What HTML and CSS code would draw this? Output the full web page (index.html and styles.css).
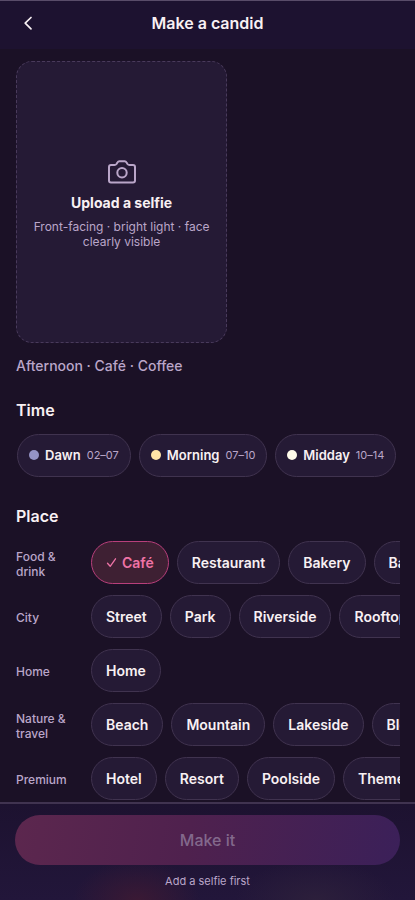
FILE: index.html
```html
<!DOCTYPE html>
<html lang="en">
<head>
<meta charset="utf-8">
<meta name="viewport" content="width=device-width, initial-scale=1">
<title>Make a candid</title>
<link rel="stylesheet" href="styles.css">
</head>
<body>
<header class="topbar">
  <button class="back" type="button" aria-label="Back">
    <svg width="20" height="20" viewBox="0 0 20 20" fill="none" stroke="currentColor" stroke-width="1.7" stroke-linecap="round" stroke-linejoin="round"><path d="M13 4.500 7.200 10.200l5.800 5.700"/></svg>
  </button>
  <h1 class="title">Make a candid</h1>
</header>
<main class="content">
  <button class="upload" type="button">
    <svg class="camera" width="28" height="28" viewBox="0 0 28 28" fill="none" stroke="currentColor" stroke-width="2" stroke-linejoin="round" stroke-linecap="round"><path d="M3 7h3.500a2.500 2.500 0 0 0 2-1l1.100-1.800a2 2 0 0 1 1.700-1h5.400a2 2 0 0 1 1.700 1L19.500 6a2.500 2.500 0 0 0 2 1H25a2 2 0 0 1 2 2v13.500a2 2 0 0 1-2 2H3a2 2 0 0 1-2-2V9a2 2 0 0 1 2-2Z"/><circle cx="14" cy="14.800" r="4.700"/></svg>
    <span class="upload-title">Upload a selfie</span>
    <span class="upload-hint">Front-facing · bright light · face clearly visible</span>
  </button>
  <p class="summary">Afternoon · Café · Coffee</p>

  <section class="time">
    <h2 class="heading">Time</h2>
    <div class="times">
      <button class="chip chip-time" type="button"><span class="dot dawn"></span>Dawn <span class="hours">02–07</span></button>
      <button class="chip chip-time" type="button"><span class="dot morning"></span>Morning <span class="hours">07–10</span></button>
      <button class="chip chip-time" type="button"><span class="dot midday"></span>Midday <span class="hours">10–14</span></button>
    </div>
  </section>

  <section class="place">
    <h2 class="heading">Place</h2>
    <div class="groups">
      <div class="group">
        <h3 class="label">Food &amp; drink</h3>
        <div class="chips">
          <button class="chip selected" type="button" aria-pressed="true"><svg width="11" height="11" viewBox="0 0 11 11" fill="none" stroke="currentColor" stroke-width="1.300" stroke-linecap="round" stroke-linejoin="round"><path d="m1.500 6.300 2.700 3L9.500 1.800"/></svg>Café</button>
          <button class="chip" type="button">Restaurant</button>
          <button class="chip" type="button">Bakery</button>
          <button class="chip" type="button">Bar</button>
        </div>
      </div>
      <div class="group">
        <h3 class="label">City</h3>
        <div class="chips">
          <button class="chip" type="button">Street</button>
          <button class="chip" type="button">Park</button>
          <button class="chip" type="button">Riverside</button>
          <button class="chip" type="button">Rooftop</button>
        </div>
      </div>
      <div class="group">
        <h3 class="label">Home</h3>
        <div class="chips">
          <button class="chip" type="button">Home</button>
        </div>
      </div>
      <div class="group">
        <h3 class="label">Nature &amp; travel</h3>
        <div class="chips">
          <button class="chip" type="button">Beach</button>
          <button class="chip" type="button">Mountain</button>
          <button class="chip" type="button">Lakeside</button>
          <button class="chip" type="button">Blossom</button>
        </div>
      </div>
      <div class="group">
        <h3 class="label">Premium</h3>
        <div class="chips">
          <button class="chip" type="button">Hotel</button>
          <button class="chip" type="button">Resort</button>
          <button class="chip" type="button">Poolside</button>
          <button class="chip" type="button">Theme park</button>
        </div>
      </div>
    </div>
  </section>
</main>
<footer class="actions">
  <button class="submit" type="button" disabled>Make it</button>
  <p class="note">Add a selfie first</p>
</footer>
</body>
</html>
```
FILE: styles.css
```css
:root {
  --bg: #1b1126;
  --surface: #251a35;
  --line: #40334f;
  --text: #f8f0f3;
  --muted: #baa6c9;
}

* { box-sizing: border-box; }

body {
  margin: 0;
  height: 100vh;
  display: flex;
  flex-direction: column;
  overflow: hidden;
  background: var(--bg);
  color: var(--text);
  font-family: Inter, "Liberation Sans", sans-serif;
}

h1, h2, h3, p { margin: 0; }

button {
  margin: 0;
  font: inherit;
  color: inherit;
  cursor: pointer;
}

.topbar {
  flex: none;
  display: grid;
  grid-template-columns: 40px 1fr 40px;
  align-items: center;
  height: 49px;
  padding: 0 8px 4px;
  border-top: 1px solid #594c69;
  background: #1d1230;
}

.back {
  display: grid;
  place-items: center;
  height: 40px;
  padding: 0;
  border: 0;
  background: none;
}

.title {
  font-size: 16px;
  line-height: 24px;
  font-weight: 600;
  text-align: center;
}

.content {
  flex: 1;
  min-height: 0;
  overflow: auto;
  padding: 12px 15px 0 16px;
  scrollbar-width: none;
}

.upload {
  display: flex;
  flex-direction: column;
  align-items: center;
  justify-content: center;
  width: 55%;
  aspect-ratio: 3 / 4;
  padding: 3px 16px 0;
  border: 1px dashed #493a5b;
  border-radius: 16px;
  background: var(--surface);
}

.camera { color: var(--muted); }

.upload-title {
  margin-top: 7px;
  font-size: 14px;
  line-height: 20px;
  font-weight: 700;
}

.upload-hint {
  margin-top: 6px;
  font-size: 12px;
  line-height: 15px;
  color: var(--muted);
}

.summary {
  margin-top: 13px;
  font-size: 14px;
  line-height: 20px;
  font-weight: 500;
  color: var(--muted);
}

.time { margin-top: 24px; }
.place { margin-top: 29px; }

.heading {
  font-size: 16px;
  line-height: 20px;
  font-weight: 600;
}

.times {
  display: flex;
  gap: 8px;
  margin-top: 14px;
  padding-left: 1px;
  overflow-x: auto;
  scrollbar-width: none;
}

.chip {
  flex: none;
  display: flex;
  align-items: center;
  height: 43px;
  padding: 0 14px;
  border: 1px solid var(--line);
  border-radius: 22px;
  background: var(--surface);
  font-size: 14px;
  font-weight: 600;
  white-space: nowrap;
}

.chip-time {
  gap: 6px;
  padding: 0 11px;
  font-size: 13px;
}

.chip.selected {
  gap: 5px;
  border-color: #b83f7b;
  background: #3e2033;
  color: #ee73a6;
}

.dot {
  width: 10px;
  height: 10px;
  border-radius: 50%;
}

.dawn { background: #9593c6; }
.morning { background: #ffe3a6; }
.midday { background: #fffbea; }

.hours {
  font-size: 11px;
  font-weight: 400;
  color: var(--muted);
}

.groups {
  display: grid;
  gap: 11px;
  margin-top: 15px;
}

.group {
  display: grid;
  grid-template-columns: 63px minmax(0, 1fr);
  gap: 12px;
  align-items: center;
}

.label {
  padding-top: 3px;
  font-size: 12px;
  line-height: 15px;
  font-weight: 500;
  color: var(--muted);
}

.chips {
  display: flex;
  gap: 8px;
  overflow-x: auto;
  scrollbar-width: none;
}

.actions {
  flex: none;
  padding: 11px 15px;
  border-top: 2px solid #403350;
  background:
    radial-gradient(64px 40px at 33% 100%, #3a1934 0%, #3a193400 100%),
    radial-gradient(80px 40px at 76% 100%, #2c1f3b 0%, #2c1f3b00 100%),
    linear-gradient(#1d1230, #22163a);
}

.submit {
  display: block;
  width: 100%;
  height: 50px;
  border: 0;
  border-radius: 25px;
  background: linear-gradient(100deg, #5c274e 0%, #4f214e 45%, #3b2059 100%);
  color: #83698c;
  font-size: 16px;
  font-weight: 500;
  cursor: default;
}

.note {
  margin-top: 8px;
  font-size: 11px;
  line-height: 16px;
  text-align: center;
  color: var(--muted);
}
```
